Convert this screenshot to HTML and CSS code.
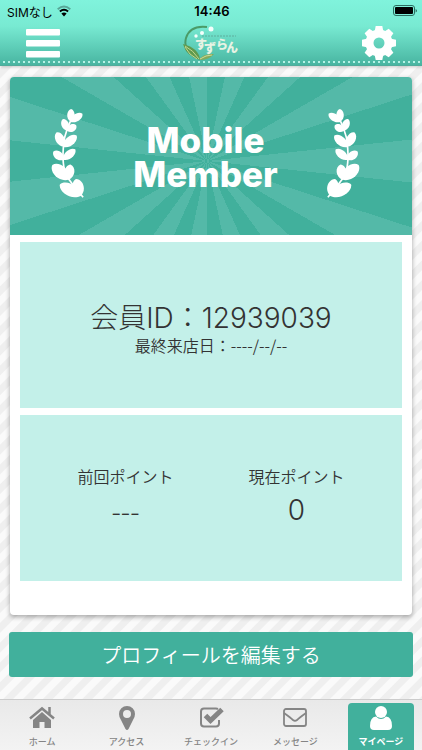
FILE: index.html
```html
<!DOCTYPE html>
<html lang="ja">
<head>
<meta charset="utf-8">
<meta name="viewport" content="width=device-width, initial-scale=1">
<title>マイページ</title>
<link rel="stylesheet" href="styles.css">
</head>
<body>
<header class="top">
  <div class="status">
    <span class="carrier">SIMなし
      <svg width="14" height="12" viewBox="0 0 14 12" aria-hidden="true"><g fill="none" stroke="#000" stroke-width="2"><path d="M0.7 4.2Q7-1.2 13.3 4.2" opacity=".3"/><path d="M2.9 6.5Q7 3 11.1 6.5"/></g><path d="M4.4 8.6Q7 6.6 9.6 8.6L7 11.4Z"/></svg>
    </span>
    <time class="clock">14:46</time>
    <svg class="battery" width="24" height="12" viewBox="0 0 24 12" aria-hidden="true"><rect x=".5" y=".5" width="21" height="10" rx="2.5" fill="none" stroke="#2b6d60"/><rect x="2" y="2" width="18" height="7" rx="1"/><path d="M22.6 4v3.6q1.4-.6 1.4-1.8T22.6 4" fill="#2b6d60"/></svg>
  </div>
  <div class="bar">
    <button class="icon-btn" type="button" aria-label="メニュー"><svg width="34" height="29" viewBox="0 0 34 29"><g fill="#fff"><rect y="0" width="34" height="6.500" rx="1"/><rect y="11" width="34" height="6.500" rx="1"/><rect y="22" width="34" height="6.500" rx="1"/></g></svg></button>
    <a class="logo" href="#" aria-label="すずらん">
      <svg width="58" height="38" viewBox="0 0 58 38">
        <path d="M25 3Q8 1 4 14Q2 21 6 28" fill="none" stroke="#4b9b68" stroke-width="2"/>
        <path d="M1 20Q4 32 18 36Q17 24 1 20Z" fill="#5f9a4e"/><path d="M3 22Q11 26 17 35M3 23Q7 31 15 35" fill="none" stroke="#c3d68d"/>
        <path d="M17 36Q21 29 32 30Q27 36 17 36Z" fill="#83aa5b"/><path d="M18 35Q24 31 30 31" stroke="#d0d996" fill="none"/>
        <path d="M20 12H54" stroke="#5fae9e" stroke-dasharray="2 1"/>
        <g fill="#f4fffc"><circle cx="14" cy="12" r="1.700"/><circle cx="20" cy="9" r="2"/><circle cx="29" cy="5" r="2.500"/></g>
        <text class="logo-text" x="13 22 34 44" y="25 29 25 28">すずらん</text>
      </svg>
    </a>
    <button class="icon-btn" type="button" aria-label="設定"><svg width="34" height="34" viewBox="-17 -17 34 34"><g fill="#fff"><path id="tooth" d="M-4.500-11L-3.300-17H3.300L4.500-11Z"/><use href="#tooth" transform="rotate(45)"/><use href="#tooth" transform="rotate(90)"/><use href="#tooth" transform="rotate(135)"/><use href="#tooth" transform="rotate(180)"/><use href="#tooth" transform="rotate(225)"/><use href="#tooth" transform="rotate(270)"/><use href="#tooth" transform="rotate(315)"/></g><circle r="9.500" fill="none" stroke="#fff" stroke-width="8"/></svg></button>
  </div>
</header>

<main>
  <section class="card">
    <div class="banner">
      <svg class="laurel" viewBox="150 115 100 268" aria-hidden="true">
        <defs><path id="leaf" d="M0 0C-17-10-14-36 0-40C14-36 17-10 0 0Z"/></defs>
        <g id="branch" fill="#fff">
          <path d="M210 155Q188 205 189 235Q184 300 206 328Q222 350 248 381" fill="none" stroke="#fff" stroke-width="5"/>
          <use href="#leaf" transform="translate(211 156) rotate(2) scale(.95 .95)"/>
          <use href="#leaf" transform="translate(209 156) rotate(57) scale(.95 1.100)"/>
          <use href="#leaf" transform="translate(202 183) rotate(-22) scale(.95 .95)"/>
          <use href="#leaf" transform="translate(200 183) rotate(60) scale(.95 .800)"/>
          <use href="#leaf" transform="translate(191 230) rotate(-28) scale(1.150 1.200)"/>
          <use href="#leaf" transform="translate(188 231) rotate(50) scale(1.150 1.330)"/>
          <use href="#leaf" transform="translate(191 269) rotate(-52) scale(1.050 1)"/>
          <use href="#leaf" transform="translate(188 269) rotate(50) scale(1.050 1.200)"/>
          <use href="#leaf" transform="translate(206 328) rotate(-49) scale(1.600 1.650)"/>
          <use href="#leaf" transform="translate(204 329) rotate(8) scale(1.250 1.150)"/>
          <use href="#leaf" transform="translate(241 377) rotate(-61) scale(1.550 1.780)"/>
          <use href="#leaf" transform="translate(241 377) rotate(-16) scale(1.400 1.320)"/>
        </g>
      </svg>
      <h1>Mobile<br>Member</h1>
      <svg class="laurel" viewBox="150 115 100 268" aria-hidden="true"><use href="#branch" transform="translate(400 0) scale(-1 1)"/></svg>
    </div>
    <div class="panels">
      <div class="panel member">
        <p class="big">会員ID：12939039</p>
        <p class="label">最終来店日：----/--/--</p>
      </div>
      <dl class="panel points">
        <div><dt class="label">前回ポイント</dt><dd class="big empty">---</dd></div>
        <div><dt class="label">現在ポイント</dt><dd class="big">0</dd></div>
      </dl>
    </div>
  </section>
  <button class="edit" type="button">プロフィールを編集する</button>
</main>

<nav class="tabs">
  <a href="#"><svg width="26" height="24" viewBox="0 0 26 24"><path d="M13 6L22 14V22H15.500V16H10.500V22H4V14Z"/><path d="M1 12.500L13 2.500L25 12.500M20.500 8V1" fill="none" stroke="currentColor" stroke-width="2.500"/></svg>ホーム</a>
  <a href="#"><svg width="26" height="24" viewBox="0 0 26 24"><path fill-rule="evenodd" d="M13 0A8 8 0 0 0 5 8Q5 11 7 14L11.500 23Q13 25 14.500 23L19 14Q21 11 21 8A8 8 0 0 0 13 0ZM13 4A4 4 0 1 1 13 12A4 4 0 1 1 13 4Z"/></svg>アクセス</a>
  <a href="#"><svg width="26" height="24" viewBox="0 0 26 24"><path d="M20 3Q19 2.500 18 2.500H6Q3 2.500 3 5.500V17.500Q3 20.500 6 20.500H18Q21 20.500 21 17.500V14" fill="none" stroke="currentColor" stroke-width="2"/><path d="M7.500 9.500L12.500 14.500L24 3.500" fill="none" stroke="currentColor" stroke-width="5"/></svg>チェックイン</a>
  <a href="#"><svg width="26" height="24" viewBox="0 0 26 24"><g fill="none" stroke="currentColor" stroke-width="1.800"><rect x="2" y="3" width="22" height="17" rx="2"/><path d="M2 7Q9 12 11 14Q13 15.500 15 14Q17 12 24 7"/></g></svg>メッセージ</a>
  <a class="active" href="#" aria-current="page"><svg width="26" height="24" viewBox="0 0 26 24"><circle cx="13" cy="6" r="6"/><path d="M8 10.500Q13 15.500 18 10.500Q24 11 24 20Q24 24 20 24H6Q2 24 2 20Q2 11 8 10.500Z"/></svg>マイページ</a>
</nav>
</body>
</html>
```
FILE: styles.css
```css
* { box-sizing: border-box; }

body {
  margin: 0;
  min-height: 100vh;
  display: flex;
  flex-direction: column;
  color: #333;
  font-family: "Liberation Sans", "Noto Sans CJK JP", sans-serif;
  background: repeating-linear-gradient(135deg, #fafafa 0 6px, #efefef 7px 13px, #fafafa 14px);
}

.top {
  height: 66px;
  background: linear-gradient(#80f3dc, #78ead2 40%, #48b5a1);
  border-bottom: 1px solid #4fac9b;
  box-shadow: 0 1px 3px #0003;
  position: relative;
}
.top::after {
  content: "";
  position: absolute;
  inset: auto 0 2px;
  height: 2px;
  background: repeating-linear-gradient(90deg, transparent 0 3px, #b4f2e5 3px 5px);
}

.status {
  display: grid;
  grid-template-columns: 1fr auto 1fr;
  align-items: center;
  height: 22px;
  padding: 0 5px 0 7px;
  color: #000;
  font-family: Inter, "Noto Sans CJK JP", sans-serif;
  font-size: 12px;
}
.carrier { display: flex; align-items: center; gap: 4px; }
.clock { font-weight: 600; font-size: 13px; }
.battery { justify-self: end; }

.bar {
  display: flex;
  justify-content: space-between;
  align-items: center;
  height: 42px;
  padding: 0 26px;
}
.icon-btn { display: flex; padding: 0; border: 0; background: none; }
.logo { display: flex; }
.logo-text {
  font: 900 12px "Noto Sans CJK JP", sans-serif;
  fill: #e8f3e4;
}

main {
  flex: 1;
  padding: 11px 9px 22px;
}

.card {
  margin: 0 1px;
  background: #fff;
  border-radius: 4px;
  overflow: hidden;
  box-shadow: 0 2px 5px #0005;
}

.banner {
  display: flex;
  justify-content: space-between;
  align-items: center;
  height: 158px;
  padding: 0 51px 0 40px;
  background: repeating-conic-gradient(from 84deg at 49% 84px, #54b9a8 0 12deg, #41b09c 12deg 24deg);
}
.laurel { width: 34px; height: 90px; margin-bottom: 6px; }
h1 {
  margin: 0;
  padding-top: 2px;
  color: #fff;
  font: 800 35px/34px Inter, sans-serif;
  text-align: center;
}

.panels {
  display: grid;
  gap: 7px;
  padding: 7px 10px 34px;
}
.panel {
  height: 166px;
  margin: 0;
  background: #c3f0e9;
  text-align: center;
}
.panel p, .panel dd { margin: 0; }
.member { padding-top: 59px; }
.big {
  font: 300 28px/34px Inter, "Noto Sans CJK JP", sans-serif;
}
.empty { font-family: "Noto Sans CJK JP", sans-serif; }
.label {
  font: 350 16px/20px "Noto Sans CJK JP", sans-serif;
}
.points {
  display: grid;
  grid-template-columns: 1fr 1fr;
  padding: 51px 20px 0;
}
.points .big { margin-top: 7px; }

.edit {
  display: block;
  width: 100%;
  height: 45px;
  margin-top: 17px;
  padding: 0;
  border: 0;
  border-radius: 3px;
  background: #41b09c;
  color: #fff;
  font: 350 20px/44px "Noto Sans CJK JP", sans-serif;
}

.tabs {
  display: grid;
  grid-template-columns: repeat(5, 1fr);
  height: 51px;
  border-top: 1px solid #ccc;
  background: linear-gradient(#e9e9e9, #f3f3f3);
}
.tabs a {
  display: flex;
  flex-direction: column;
  align-items: center;
  gap: 4px;
  margin: 3px 9px 0;
  padding-top: 3px;
  color: #858585;
  font: 500 9px/16px "Noto Sans CJK JP", sans-serif;
  text-decoration: none;
  white-space: nowrap;
}
.tabs svg { flex: none; fill: currentColor; }
.tabs .active {
  margin: 3px 8px 0 10px;
  background: #41b09c;
  border-radius: 4px 4px 0 0;
  color: #fff;
  font-weight: 700;
}
```
